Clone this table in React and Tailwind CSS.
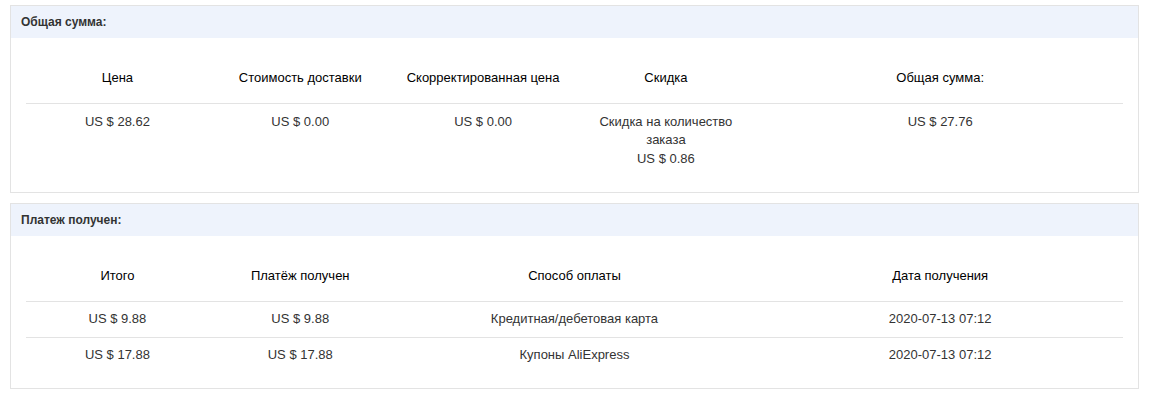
import React from "react";

const totals = [
    { title: "Цена", value: ["US $ 28.62"] },
    { title: "Стоимость доставки", value: ["US $ 0.00"] },
    { title: "Скорректированная цена", value: ["US $ 0.00"] },
    { title: "Скидка", value: ["Скидка на количество", "заказа", "US $ 0.86"] },
    { title: "Общая сумма:", value: ["US $ 27.76"], wide: true },
];

const payments = [
    ["US $ 9.88", "US $ 9.88", "Кредитная/дебетовая карта", "2020-07-13 07:12"],
    ["US $ 17.88", "US $ 17.88", "Купоны AliExpress", "2020-07-13 07:12"],
];

function Panel({ title, children }) {
    return (
        <div className="border border-[#e3e3e3] bg-white">
            <div className="h-8 bg-[#eef3fc] pl-[10px] flex items-center text-xs font-bold text-[#333]">
                {title}
            </div>
            <div className="p-[15px]">{children}</div>
        </div>
    );
}

export default function App() {
    return (
        <div className="bg-white min-h-screen pt-[5px] px-[10px] text-[13px] text-[#333]" style={{ fontFamily: '"Liberation Sans", Arial, sans-serif' }}>
            <Panel title="Общая сумма:">
                <table className="w-full table-fixed border-collapse text-center">
                    <colgroup>
                        <col className="w-1/6" />
                        <col className="w-1/6" />
                        <col className="w-1/6" />
                        <col className="w-1/6" />
                        <col className="w-2/6" />
                    </colgroup>
                    <thead>
                    <tr className="h-[50px] border-b border-[#e3e3e3]">
                        {totals.map(col =>
                            <th key={col.title} className="font-normal text-black">{col.title}</th>
                        )}
                    </tr>
                    </thead>
                    <tbody>
                    <tr>
                        {totals.map(col =>
                            <td key={col.title} className="align-top pt-[9px] pb-[9px] leading-[18.5px]">
                                {col.value.map(line => <div key={line}>{line}</div>)}
                            </td>
                        )}
                    </tr>
                    </tbody>
                </table>
            </Panel>
            <div className="h-[10px]" />
            <Panel title="Платеж получен:">
                <table className="w-full table-fixed border-collapse text-center">
                    <colgroup>
                        <col className="w-1/6" />
                        <col className="w-1/6" />
                        <col className="w-2/6" />
                        <col className="w-2/6" />
                    </colgroup>
                    <thead>
                    <tr className="h-[50px] border-b border-[#e3e3e3]">
                        {["Итого", "Платёж получен", "Способ оплаты", "Дата получения"].map(name =>
                            <th key={name} className="font-normal text-black">{name}</th>
                        )}
                    </tr>
                    </thead>
                    <tbody>
                    {payments.map((row, i) =>
                        <tr key={i} className={i < payments.length - 1 ? "h-9 border-b border-[#e3e3e3]" : "h-9"}>
                            {row.map((cell, j) =>
                                <td key={j} className="leading-[18px]">{cell}</td>
                            )}
                        </tr>
                    )}
                    </tbody>
                </table>
            </Panel>
        </div>
    );
}
